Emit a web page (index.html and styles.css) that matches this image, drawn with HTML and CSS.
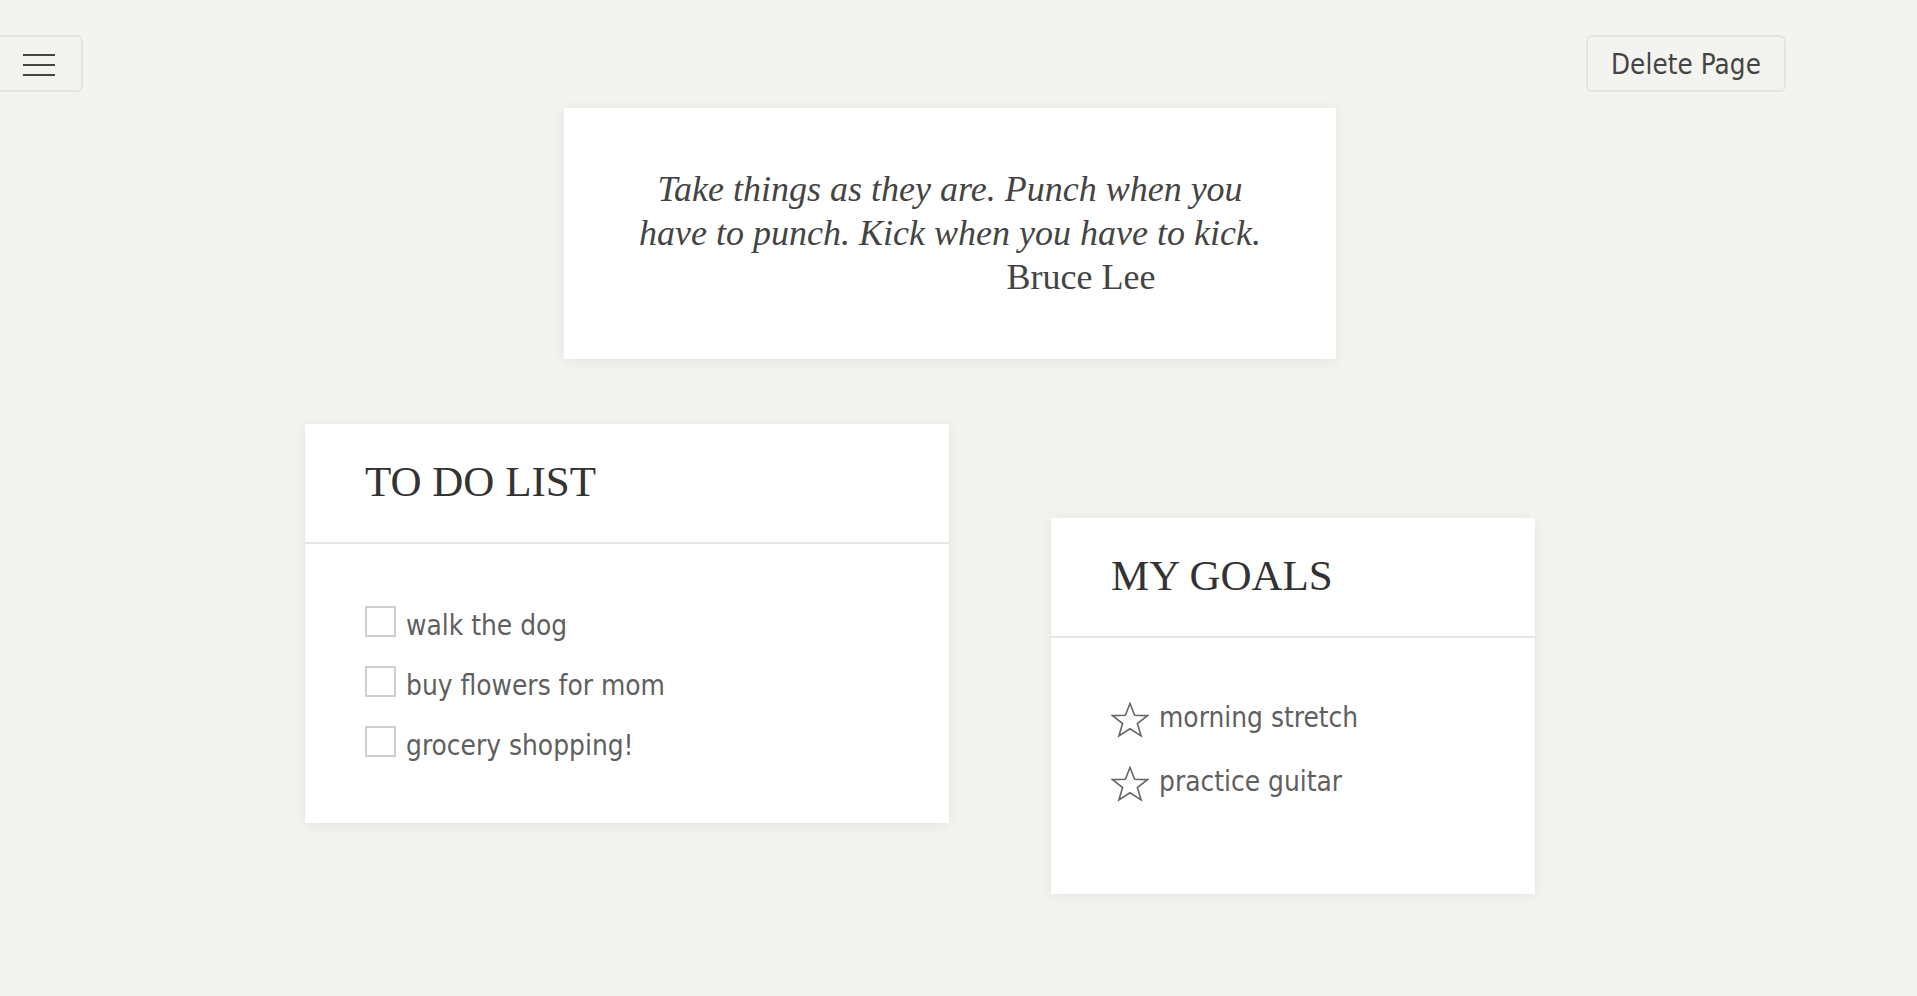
FILE: index.html
```html
<!DOCTYPE html>
<html lang="en">
<head>
<meta charset="utf-8">
<title>Page</title>
<link rel="stylesheet" href="styles.css">
</head>
<body>
<header class="topbar">
  <button class="btn menu-btn" aria-label="Menu">
    <span class="bar"></span><span class="bar"></span><span class="bar"></span>
  </button>
  <button class="btn delete-btn">Delete Page</button>
</header>

<main class="board">
  <section class="card quote-card">
    <blockquote class="quote">
      <p class="quote-text">Take things as they are. Punch when you<br>have to punch. Kick when you have to kick.</p>
      <cite class="quote-author">Bruce Lee</cite>
    </blockquote>
  </section>

  <section class="card todo-card">
    <h2 class="card-title">TO DO LIST</h2>
    <ul class="card-list todo-list">
      <li class="todo-item"><span class="checkbox"></span><span>walk the dog</span></li>
      <li class="todo-item"><span class="checkbox"></span><span>buy flowers for mom</span></li>
      <li class="todo-item"><span class="checkbox"></span><span>grocery shopping!</span></li>
    </ul>
  </section>

  <section class="card goals-card">
    <h2 class="card-title">MY GOALS</h2>
    <ul class="card-list goals-list">
      <li class="goal-item">
        <svg class="star" viewBox="0 0 38 36" width="38" height="36"><polygon points="19,1.5 23.6,13.2 36.5,13.6 26.4,21.6 30.1,34 19,26.8 7.9,34 11.6,21.6 1.5,13.6 14.4,13.2" /></svg>
        <span>morning stretch</span>
      </li>
      <li class="goal-item">
        <svg class="star" viewBox="0 0 38 36" width="38" height="36"><polygon points="19,1.5 23.6,13.2 36.5,13.6 26.4,21.6 30.1,34 19,26.8 7.9,34 11.6,21.6 1.5,13.6 14.4,13.2" /></svg>
        <span>practice guitar</span>
      </li>
    </ul>
  </section>
</main>
</body>
</html>
```

FILE: styles.css
```css
* { box-sizing: border-box; }

html, body {
  margin: 0;
  padding: 0;
}

body {
  background: #f3f3ef;
  width: 1917px;
  height: 996px;
  overflow: hidden;
  position: relative;
  font-family: "DejaVu Sans Condensed", "DejaVu Sans", sans-serif;
}

.topbar {
  display: flex;
  justify-content: space-between;
  align-items: flex-start;
  padding: 35px 131px 0 0;
}

.btn {
  height: 57px;
  background: #f3f3ef;
  border: 2px solid #e5e5e0;
  border-radius: 6px;
  font-family: "DejaVu Sans Condensed", "DejaVu Sans", sans-serif;
  color: #444;
  cursor: pointer;
  padding: 0;
}

.menu-btn {
  width: 88px;
  margin-left: -5px;
  display: flex;
  flex-direction: column;
  align-items: center;
  justify-content: center;
  gap: 8px;
  padding-top: 2px;
}

.menu-btn .bar {
  display: block;
  width: 32px;
  height: 2px;
  background: #444;
}

.delete-btn {
  width: 200px;
  font-size: 27.5px;
  letter-spacing: 0.1px;
}

.board {
  position: absolute;
  inset: 0;
  pointer-events: none;
}

.card {
  position: absolute;
  background: #fff;
  box-shadow: 0 2px 14px rgba(0, 0, 0, 0.07);
  pointer-events: auto;
}

.quote-card {
  left: 564px;
  top: 108px;
  width: 772px;
  height: 251px;
  padding-top: 59px;
}

.quote {
  margin: 0;
  text-align: center;
  font-family: "Liberation Serif", serif;
  font-size: 36px;
  line-height: 44px;
  color: #444;
}

.quote-text {
  margin: 0;
  font-style: italic;
}

.quote-author {
  display: block;
  font-style: normal;
  padding-left: 262px;
  margin-top: 0;
}

.todo-card {
  left: 305px;
  top: 424px;
  width: 644px;
  height: 399px;
}

.goals-card {
  left: 1051px;
  top: 518px;
  width: 484px;
  height: 376px;
}

.card-title {
  margin: 0;
  padding: 33px 60px 0;
  height: 120px;
  border-bottom: 2px solid #e6e6e6;
  font-family: "Liberation Serif", serif;
  font-weight: normal;
  font-size: 43px;
  line-height: 50px;
  color: #333;
}

.card-list {
  list-style: none;
  margin: 0;
  padding: 0 60px;
  font-size: 27.8px;
  color: #5f5f5f;
}

.todo-list {
  padding-top: 52px;
}

.todo-item {
  display: flex;
  align-items: flex-start;
  height: 60px;
  line-height: 60px;
  gap: 10px;
}

.checkbox {
  width: 31px;
  height: 31px;
  margin-top: 10px;
  border: 2px solid #cfcfcf;
  flex: none;
}

.goals-list {
  padding-top: 48px;
}

.goal-item {
  display: flex;
  align-items: center;
  height: 64px;
  line-height: 64px;
  gap: 10px;
}

.star {
  flex: none;
  margin-top: 4px;
}

.star polygon {
  fill: none;
  stroke: #666;
  stroke-width: 1.6;
  stroke-linejoin: miter;
}
```
